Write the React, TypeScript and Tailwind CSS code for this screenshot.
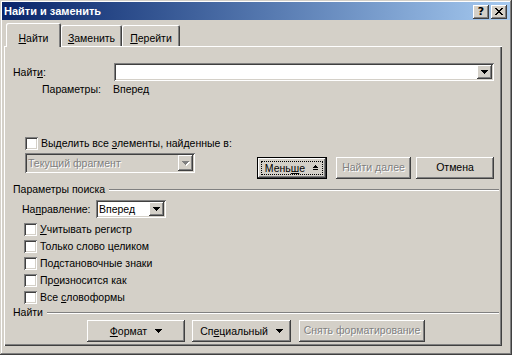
import React from "react";

const raised =
  "shadow-[inset_-1px_-1px_#404040,inset_1px_1px_#ffffff,inset_-2px_-2px_#808080,inset_2px_2px_#d4d0c8]";
const sunken =
  "shadow-[inset_1px_1px_#808080,inset_-1px_-1px_#ffffff,inset_2px_2px_#404040,inset_-2px_-2px_#d4d0c8]";

function DownArrow({ color = "#000000" }: { color?: string }) {
  return (
    <svg width="7" height="4" viewBox="0 0 7 4" shapeRendering="crispEdges" className="block">
      <rect x="0" y="0" width="7" height="1" fill={color} />
      <rect x="1" y="1" width="5" height="1" fill={color} />
      <rect x="2" y="2" width="3" height="1" fill={color} />
      <rect x="3" y="3" width="1" height="1" fill={color} />
    </svg>
  );
}

function LessIcon() {
  return (
    <svg width="7" height="6" viewBox="0 0 7 6" shapeRendering="crispEdges" className="block">
      <rect x="3" y="0" width="1" height="1" fill="#000" />
      <rect x="2" y="1" width="3" height="1" fill="#000" />
      <rect x="1" y="2" width="5" height="1" fill="#000" />
      <rect x="1" y="4" width="5" height="1" fill="#000" />
    </svg>
  );
}

function ComboButton({ disabled = false }: { disabled?: boolean }) {
  return (
    <div className={`w-[15px] h-full bg-[#d4d0c8] flex items-center justify-center ${raised}`}>
      {disabled ? (
        <div className="relative">
          <div className="absolute left-[1px] top-[1px]">
            <DownArrow color="#ffffff" />
          </div>
          <div className="relative">
            <DownArrow color="#808080" />
          </div>
        </div>
      ) : (
        <DownArrow />
      )}
    </div>
  );
}

function Checkbox({ children }: { children: React.ReactNode }) {
  return (
    <div className="flex items-center h-[17px] ml-[11px]">
      <div className={`w-[13px] h-[13px] bg-white ${sunken}`} />
      <span className="ml-[3px] leading-[13px]">{children}</span>
    </div>
  );
}

function GroupHeader({ children }: { children: React.ReactNode }) {
  return (
    <div className="flex items-center h-[13px] pr-[3px]">
      <span className="leading-[13px]">{children}</span>
      <div className="flex-1 ml-[4px] h-[2px] border-t border-t-[#808080] border-b border-b-white" />
    </div>
  );
}

function Button({
  children,
  width,
  disabled = false,
  className = "",
}: {
  children: React.ReactNode;
  width: string;
  disabled?: boolean;
  className?: string;
}) {
  return (
    <div
      className={`h-[22px] ${width} bg-[#d4d0c8] flex items-center justify-center ${raised} ${className} ${
        disabled ? "text-[#808080] [text-shadow:1px_1px_0_#ffffff]" : ""
      }`}
    >
      {children}
    </div>
  );
}

export default function App() {
  return (
    <div className="w-[512px] h-[355px] overflow-hidden bg-[#d4d0c8] font-['Liberation_Sans',Arial,sans-serif] text-[10.5px] text-black p-[2px] shadow-[inset_-1px_-1px_#404040,inset_1px_1px_#d4d0c8,inset_-2px_-2px_#808080,inset_2px_2px_#ffffff] flex flex-col select-none">
      {/* Title bar */}
      <div className="h-[18px] bg-linear-to-r from-[#0a246a] to-[#a6caf0] flex items-center pl-[2px] pr-[3px]">
        <span className="text-white font-bold text-[11px] leading-[13px]">Найти и заменить</span>
        <div className="ml-auto flex gap-[2px] mt-[1px]">
          <div className={`w-[16px] h-[14px] bg-[#d4d0c8] flex items-center justify-center ${raised}`}>
            <span className="font-bold text-[11px] leading-[11px] font-['DejaVu_Sans',sans-serif]">?</span>
          </div>
          <div className={`w-[16px] h-[14px] bg-[#d4d0c8] flex items-center justify-center ${raised}`}>
            <svg width="8" height="7" viewBox="0 0 8 7" shapeRendering="crispEdges" className="block">
              <path d="M0 0h2v1h-2zM6 0h2v1h-2zM1 1h2v1h-2zM5 1h2v1h-2zM2 2h4v1h-4zM3 3h2v1h-2zM2 4h4v1h-4zM1 5h2v1h-2zM5 5h2v1h-2zM0 6h2v1h-2zM6 6h2v1h-2z" fill="#000" />
            </svg>
          </div>
        </div>
      </div>

      {/* Tabs */}
      <div className="relative z-10 flex items-end h-[24px] mt-[3px] pl-[4px]">
        <div className="w-[55px] h-[24px] bg-[#d4d0c8] rounded-t-[2px] shadow-[inset_1px_1px_#ffffff,inset_-1px_0_#404040,inset_-2px_0_#808080] flex justify-center pt-[9px]">
          <span className="leading-[13px]">
            <u>Н</u>айти
          </span>
        </div>
        <div className="w-[61px] h-[21px] mb-[1px] bg-[#d4d0c8] rounded-t-[2px] shadow-[inset_1px_1px_#ffffff,inset_-1px_0_#404040,inset_-2px_0_#808080] flex justify-center pt-[7px]">
          <span className="leading-[13px]">
            <u>З</u>аменить
          </span>
        </div>
        <div className="w-[58px] h-[21px] mb-[1px] bg-[#d4d0c8] rounded-t-[2px] shadow-[inset_1px_1px_#ffffff,inset_-1px_0_#404040,inset_-2px_0_#808080] flex justify-center pt-[7px]">
          <span className="leading-[13px]">
            <u>П</u>ерейти
          </span>
        </div>
      </div>

      {/* Panel */}
      <div className="-mt-[1px] ml-[2px] w-[498px] h-[300px] shadow-[inset_1px_1px_#ffffff,inset_-1px_-1px_#404040,inset_-2px_-2px_#808080] pl-[9px] flex flex-col">
        {/* Find row */}
        <div className="flex items-center mt-[17px]">
          <span className="w-[101px] leading-[13px]">
            Найт<u>и</u>:
          </span>
          <div className={`w-[380px] h-[18px] bg-white ${sunken} p-[2px] flex justify-end`}>
            <ComboButton />
          </div>
        </div>

        {/* Options */}
        <div className="flex mt-[2px] ml-[29px] leading-[13px]">
          <span className="w-[71px]">Параметры:</span>
          <span>Вперед</span>
        </div>

        {/* Highlight checkbox */}
        <div className="flex items-center mt-[41px] ml-[12px]">
          <div className={`w-[13px] h-[13px] bg-white ${sunken}`} />
          <span className="ml-[3px] leading-[13px]">
            Выделить все <u>э</u>лементы, найденные в:
          </span>
        </div>

        {/* Select + buttons */}
        <div className="flex items-start mt-[3px]">
          <div className={`ml-[12px] w-[170px] h-[20px] bg-[#d4d0c8] ${sunken} p-[2px] flex items-center`}>
            <span className="flex-1 pl-[1px] text-[#808080] [text-shadow:1px_1px_0_#ffffff] leading-[13px]">
              Текущий фрагмент
            </span>
            <ComboButton disabled />
          </div>
          <div className="ml-[62px] mt-[4px] w-[70px] h-[22px] border border-black">
            <div className={`w-full h-full bg-[#d4d0c8] ${raised} p-[3px]`}>
              <div className="w-full h-full border border-dotted border-black flex items-center justify-center gap-[7px]">
                <span className="leading-[13px]">
                  Мень<u>ш</u>е
                </span>
                <LessIcon />
              </div>
            </div>
          </div>
          <Button width="w-[75px]" disabled className="ml-[9px] mt-[4px]">
            Найти далее
          </Button>
          <Button width="w-[78px]" className="ml-[5px] mt-[4px]">
            Отмена
          </Button>
        </div>

        {/* Search params */}
        <div className="mt-[4px]">
          <GroupHeader>Параметры поиска</GroupHeader>
        </div>

        <div className="flex items-center mt-[4px] ml-[9px]">
          <span className="w-[74px] leading-[13px]">
            На<u>п</u>равление:
          </span>
          <div className={`w-[70px] h-[18px] bg-white ${sunken} p-[2px] flex items-center`}>
            <span className="flex-1 pl-[1px] leading-[13px]">Вперед</span>
            <ComboButton />
          </div>
        </div>

        <div className="flex flex-col mt-[3px]">
          <Checkbox>
            <u>У</u>читывать регистр
          </Checkbox>
          <Checkbox>Только слово целиком</Checkbox>
          <Checkbox>Подстановочные знаки</Checkbox>
          <Checkbox>
            Пр<u>о</u>износится как
          </Checkbox>
          <Checkbox>
            Все <u>с</u>ловоформы
          </Checkbox>
        </div>

        <GroupHeader>Найти</GroupHeader>

        <div className="flex mt-[1px]">
          <Button width="w-[98px]" className="ml-[74px] gap-[8px]">
            <span className="leading-[13px]">
              <u>Ф</u>ормат
            </span>
            <DownArrow />
          </Button>
          <Button width="w-[99px]" className="ml-[7px] gap-[8px]">
            <span className="leading-[13px]">
              Сп<u>е</u>циальный
            </span>
            <DownArrow />
          </Button>
          <Button width="w-[126px]" disabled className="ml-[8px]">
            Снять форматирование
          </Button>
        </div>
      </div>
    </div>
  );
}
